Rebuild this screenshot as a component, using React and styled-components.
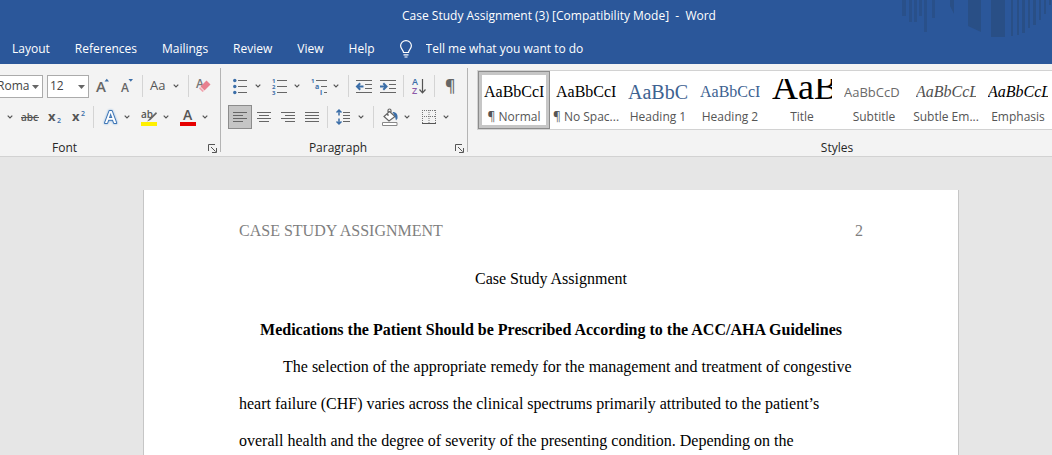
import styled, { createGlobalStyle } from "styled-components"

const tabs = ["Layout", "References", "Mailings", "Review", "View", "Help"]

const serif = `"Liberation Serif", "Times New Roman", serif`
const sans = `"Open Sans", "Noto Sans", sans-serif`

const styles = [
  { name: "¶ Normal", sample: "AaBbCcI", size: 16, color: "#000", selected: true },
  { name: "¶ No Spac...", sample: "AaBbCcI", size: 16, color: "#000" },
  { name: "Heading 1", sample: "AaBbC", size: 20, color: "#3d6291" },
  { name: "Heading 2", sample: "AaBbCcI", size: 16, color: "#3d6291" },
  { name: "Title", sample: "AaB", size: 36, line: 16, color: "#000" },
  { name: "Subtitle", sample: "AaBbCcD", size: 13, color: "#6a6a6a", font: sans },
  { name: "Subtle Em...", sample: "AaBbCcL", size: 16, color: "#505050", italic: true },
  { name: "Emphasis", sample: "AaBbCcL", size: 16, color: "#000", italic: true },
]

const Icon = ({ children, ...rest }) => (
  <svg width="16" height="18" viewBox="0 0 16 18" fill="none" overflow="visible" aria-hidden="true" {...rest}>
    {children}
  </svg>
)

const Chevron = () => (
  <svg width="6" height="4" viewBox="0 0 6 4" fill="none" aria-hidden="true">
    <path d="M.7 .7 3 3 5.3 .7" stroke="#555" strokeWidth="1.2" />
  </svg>
)

const Lines = ({ rows }) => (
  <Icon>
    {rows.map(([from, to], i) => (
      <path key={i} d={`M${from} ${4.5 + i * 3}H${to}`} stroke="#666" />
    ))}
  </Icon>
)

const Split = ({ label, children }) => (
  <SplitButton aria-label={label}>
    {children}
    <Chevron />
  </SplitButton>
)

const Combo = ({ label, value, width, flush }) => (
  <ComboBox $width={width} $flush={flush}>
    <select aria-label={label} defaultValue={value}>
      <option>{value}</option>
    </select>
    <svg width="7" height="4" viewBox="0 0 7 4" aria-hidden="true">
      <path d="M0 0h7L3.500 4z" fill="#666" />
    </svg>
  </ComboBox>
)

const Launcher = ({ label }) => (
  <LauncherButton aria-label={label}>
    <svg width="9" height="9" viewBox="0 0 9 9" fill="none" aria-hidden="true">
      <path d="M.5 7V.5H7M3 3l4.500 4.500M8.500 4v4.500H4" stroke="#555" />
    </svg>
  </LauncherButton>
)

const TitleArt = () => (
  <Art width="152" height="40" viewBox="0 0 152 40" aria-hidden="true">
    <g fill="#294f86">
      <path d="M2 0h4v16H2zM9 0h3v22H9zM14 0h3v22h-3zM19 0h3v16h-3zM24 0h3v32h-3zM32 0h3v18h-3z" opacity=".8" />
      <path d="M50 0h4v14l-4-8z" />
      <path d="M68 0h13v32l-13-6zM91 0h14v37H91z" />
      <path d="M111 0h2v36h-2zM117 0h2v35h-2zM122 0h3v33h-3zM128 0h2v28h-2zM133 0h3v25h-3zM139 0h2v20h-2zM144 0h2v14h-2zM149 0h2v5h-2z" />
    </g>
  </Art>
)

const FontGroup = () => (
  <Group>
    <Row>
      <Combo label="Font" value="Roma" width={43} flush />
      <Combo label="Font size" value="12" width={42} />
      <Tool aria-label="Increase font size">
        <Icon>
          <text x="1" y="15" fontSize="15" fontWeight="600" fill="#666">A</text>
          <path d="M9.500 4.500 11.800 1.800 14 4.500z" fill="#3b6ea8" />
        </Icon>
      </Tool>
      <Tool aria-label="Decrease font size">
        <Icon>
          <text x="2" y="15" fontSize="12" fontWeight="600" fill="#666">A</text>
          <path d="M9.500 2 11.800 4.700 14 2z" fill="#3b6ea8" />
        </Icon>
      </Tool>
      <Separator />
      <Split label="Change case">
        <Icon>
          <text x="-1" y="13" fontSize="13" fill="#555">Aa</text>
        </Icon>
      </Split>
      <Separator />
      <Tool aria-label="Clear all formatting">
        <Icon>
          <text x="0" y="11" fontSize="12" fontWeight="600" fill="#777">A</text>
          <path d="M10.500 3.500 14.500 7.500 8.500 13.500 4.500 9.500z" fill="#e8808f" />
          <path d="M4 10 8 14 6.500 15 3 11.500z" fill="#f0a3ae" />
        </Icon>
      </Tool>
    </Row>
    <Row $indent={7}>
      <MiniButton aria-label="Underline options"><Chevron /></MiniButton>
      <Tool aria-label="Strikethrough">
        <Icon>
          <text x="-1" y="13" fontSize="10" fontWeight="600" fill="#555">abc</text>
          <path d="M-1 9.500h18" stroke="#555" />
        </Icon>
      </Tool>
      <Tool aria-label="Subscript">
        <Icon>
          <text x="2" y="13" fontSize="13" fontWeight="700" fill="#555">x</text>
          <text x="11" y="15" fontSize="7" fontWeight="600" fill="#3b6ea8">2</text>
        </Icon>
      </Tool>
      <Tool aria-label="Superscript">
        <Icon>
          <text x="2" y="13" fontSize="13" fontWeight="700" fill="#555">x</text>
          <text x="11" y="8" fontSize="7" fontWeight="600" fill="#3b6ea8">2</text>
        </Icon>
      </Tool>
      <Separator />
      <Split label="Text effects">
        <Icon>
          <OutlinedLetter x="3" y="15">A</OutlinedLetter>
        </Icon>
      </Split>
      <Split label="Text highlight color">
        <Icon>
          <text x="0" y="10" fontSize="10" fontWeight="600" fill="#555">ab</text>
          <path d="M15 4 8.500 10.500 6 13.500l3.500-1.500L16 5.500z" fill="#666" />
          <path d="M0 14h16v4H0z" fill="#fff000" />
        </Icon>
      </Split>
      <Split label="Font color">
        <Icon>
          <text x="3" y="12" fontSize="14" fontWeight="600" fill="#555">A</text>
          <path d="M0 14h16v4H0z" fill="#e60000" />
        </Icon>
      </Split>
    </Row>
    <Footer $shift={79}>
      <span>Font</span>
      <Launcher label="Font settings" />
    </Footer>
  </Group>
)

const ParagraphGroup = () => (
  <Group>
    <Row $indent={7}>
      <Split label="Bullets">
        <Icon>
          {[3.5, 9.5, 15.5].map(y => (
            <g key={y}>
              <circle cx="1.800" cy={y} r="1.700" fill="#3b6ea8" />
              <path d={`M5 ${y}h9`} stroke="#666" />
            </g>
          ))}
        </Icon>
      </Split>
      <Split label="Numbering">
        <Icon>
          {[1, 2, 3].map(n => (
            <g key={n}>
              <text x="0" y={n * 6} fontSize="6" fontWeight="700" fill="#3b6ea8">{n}</text>
              <path d={`M5 ${n * 6 - 2.5}h10`} stroke="#666" />
            </g>
          ))}
        </Icon>
      </Split>
      <Split label="Multilevel list">
        <Icon>
          <text x="0" y="6" fontSize="6" fontWeight="700" fill="#3b6ea8">1</text>
          <text x="4" y="12" fontSize="7" fontWeight="700" fill="#3b6ea8">a</text>
          <text x="9" y="18" fontSize="7" fontWeight="700" fill="#3b6ea8">i</text>
          <path d="M5 3.500h11M10 9.500h6M13 15.500h3" stroke="#666" />
        </Icon>
      </Split>
      <Separator />
      <Tool aria-label="Decrease indent">
        <Icon>
          <path d="M0 3.500h16M9 7.500h7M9 11.500h7M0 15.500h16" stroke="#666" />
          <path d="M7.500 9.500H1M4.200 6.300 1 9.500l3.200 3.200" stroke="#3b6ea8" strokeWidth="2" />
        </Icon>
      </Tool>
      <Tool aria-label="Increase indent">
        <Icon>
          <path d="M0 3.500h16M9 7.500h7M9 11.500h7M0 15.500h16" stroke="#666" />
          <path d="M0 9.500h6.500M3.300 6.300l3.200 3.200-3.200 3.200" stroke="#3b6ea8" strokeWidth="2" />
        </Icon>
      </Tool>
      <Separator />
      <Tool aria-label="Sort">
        <Icon>
          <text x="1" y="8" fontSize="9" fontWeight="600" fill="#3b6ea8">A</text>
          <text x="1" y="17" fontSize="9" fontWeight="600" fill="#8c5aa8">Z</text>
          <path d="M11.500 2v14M8.500 12.500l3 3.300 3-3.300" stroke="#555" strokeWidth="1.200" />
        </Icon>
      </Tool>
      <Separator />
      <Tool aria-label="Show paragraph marks">
        <Icon>
          <text x="3" y="14" fontSize="16" fontWeight="600" fill="#666">¶</text>
        </Icon>
      </Tool>
    </Row>
    <Row $indent={7}>
      <Tool aria-label="Align left" aria-pressed="true">
        <Lines rows={[[1, 15], [1, 11], [1, 15], [1, 11]]} />
      </Tool>
      <Tool aria-label="Center">
        <Lines rows={[[1, 15], [3, 13], [1, 15], [3, 13]]} />
      </Tool>
      <Tool aria-label="Align right">
        <Lines rows={[[1, 15], [5, 15], [1, 15], [5, 15]]} />
      </Tool>
      <Tool aria-label="Justify">
        <Lines rows={[[1, 15], [1, 15], [1, 15], [1, 15]]} />
      </Tool>
      <Separator />
      <Split label="Line spacing">
        <Icon>
          <path d="M3 2v5.500M3 10.500V16M.5 4.500 3 2l2.500 2.500M.5 13.500 3 16l2.500-2.500" stroke="#3b6ea8" strokeWidth="1.500" />
          <path d="M7 4.500h7M7 7.500h7M7 10.500h7M7 13.500h7" stroke="#666" />
        </Icon>
      </Split>
      <Separator />
      <Split label="Shading">
        <Icon>
          <path d="M7.500 3.500 13 8.500l-6 4.500-5-4.500zM6 8V2.500a1.500 1.500 0 0 1 3 0V6" fill="#fff" stroke="#666" strokeWidth="1.200" />
          <path d="M10.500 4c4 0 5.500 2.500 5 6.500l-1.500 2-1-4z" fill="#3b6ea8" />
          <path d="M.5 14.500h14.500v3H.5z" fill="#fff" stroke="#888" />
        </Icon>
      </Split>
      <Split label="Borders">
        <Icon>
          <path d="M1 2.500h14M1 8.500h14M1.500 2v13M8 2v13M14.500 2v13" stroke="#777" strokeDasharray="1 1" />
          <path d="M1 15.500h14" stroke="#555" />
        </Icon>
      </Split>
    </Row>
    <Footer>
      <span>Paragraph</span>
      <Launcher label="Paragraph settings" />
    </Footer>
  </Group>
)

const StylesGroup = () => (
  <StylesPanel>
    <Gallery>
      {styles.map(({ name, sample, size, line, color, font, italic, selected }) => (
        <StyleCard key={name} aria-pressed={!!selected}>
          <Sample $size={size} $line={line} $color={color} $font={font} $italic={italic}>{sample}</Sample>
          <StyleName>{name}</StyleName>
        </StyleCard>
      ))}
    </Gallery>
    <Footer>
      <span>Styles</span>
    </Footer>
  </StylesPanel>
)

const App = () => {
  return (
    <Window>
      <GlobalStyle />
      <Header>
        <TitleArt />
        <TitleBar>Case Study Assignment (3) [Compatibility Mode]&nbsp; -&nbsp; Word</TitleBar>
        <Tabs>
          {tabs.map(tab => <Tab key={tab}>{tab}</Tab>)}
          <TellMe>
            <svg width="12" height="18" viewBox="0 0 12 18" fill="none" stroke="#fff" strokeWidth="1.200" aria-hidden="true">
              <path d="M3.500 12.500c0-2.500-2.900-3.500-2.900-6.700a5.400 5.200 0 0 1 10.800 0c0 3.200-2.900 4.200-2.900 6.700zM3.500 14.800h5M4.500 17h3" />
            </svg>
            <input aria-label="Tell me" placeholder="Tell me what you want to do" />
          </TellMe>
        </Tabs>
      </Header>

      <Ribbon>
        <FontGroup />
        <ParagraphGroup />
        <StylesGroup />
      </Ribbon>

      <Canvas>
        <Page>
          <PageHeader>
            <span>CASE STUDY ASSIGNMENT</span>
            <span>2</span>
          </PageHeader>
          <DocTitle>Case Study Assignment</DocTitle>
          <DocHeading>Medications the Patient Should be Prescribed According to the ACC/AHA Guidelines</DocHeading>
          <DocText>
            The selection of the appropriate remedy for the management and treatment of congestive
            heart failure (CHF) varies across the clinical spectrums primarily attributed to the patient’s
            overall health and the degree of severity of the presenting condition. Depending on the
          </DocText>
        </Page>
      </Canvas>
    </Window>
  )
}

const GlobalStyle = createGlobalStyle`
  * {
    box-sizing: border-box;
  }
  body {
    margin: 0;
    font-family: ${sans};
    font-size: 12px;
    line-height: 16px;
    color: #262626;
  }
  button, select, input {
    margin: 0;
    padding: 0;
    border: 0;
    background: none;
    font: inherit;
    color: inherit;
  }
`

const Window = styled.div`
  display: flex;
  flex-direction: column;
  height: 100vh;
  overflow: hidden;
`

const Header = styled.header`
  position: relative;
  background: #2b579a;
  color: #fff;
`

const Art = styled.svg`
  position: absolute;
  top: 0;
  right: 0;
`

const TitleBar = styled.div`
  padding: 8px 0 8px 66px;
  text-align: center;
`

const Tabs = styled.nav`
  display: flex;
  align-items: center;
  gap: 25px;
  height: 32px;
  padding: 2px 12px 0;
`

const Tab = styled.button`
  white-space: nowrap;
`

const TellMe = styled.label`
  display: flex;
  align-items: center;
  gap: 14px;

  input {
    width: 200px;
    outline: none;
  }
  input::placeholder {
    color: #fff;
    opacity: 1;
  }
`

const Ribbon = styled.div`
  display: flex;
  overflow: hidden;
  flex-shrink: 0;
  background: #f3f3f3;
  border-bottom: 1px solid #d2d2d2;
`

const Group = styled.section`
  display: flex;
  flex-direction: column;
  gap: 7px;
  flex: 0 0 auto;
  width: 247px;
  padding-top: 10px;
  background: linear-gradient(#b4b4b4, #b4b4b4) right center / 1px 84px no-repeat;

  &:first-child {
    width: 221px;
  }
`

const Row = styled.div`
  display: flex;
  align-items: center;
  height: 24px;
  padding-left: ${({ $indent }) => $indent || 0}px;
`

const Tool = styled.button`
  display: flex;
  align-items: center;
  justify-content: center;
  width: 24px;
  height: 24px;

  &[aria-pressed="true"] {
    background: #c5c5c5;
    border: 1px solid #8c8c8c;
  }
`

const SplitButton = styled.button`
  display: flex;
  align-items: center;
  gap: 6px;
  height: 24px;
  margin: 0 6px 0 5px;
`

const MiniButton = styled.button`
  display: flex;
  margin-right: 5px;
`

const OutlinedLetter = styled.text`
  font-size: 17px;
  font-weight: 600;
  fill: #fff;
  stroke: #3d74b3;
  stroke-width: 2px;
  stroke-linejoin: round;
  paint-order: stroke;
  filter: drop-shadow(0 0 1px #7fb0e0);
`

const Separator = styled.span`
  width: 1px;
  height: 22px;
  margin: 0 3px;
  background: #d4d4d4;
`

const ComboBox = styled.span`
  position: relative;
  width: ${({ $width }) => $width}px;
  margin-right: ${({ $flush }) => ($flush ? 4 : 2)}px;

  select {
    display: block;
    appearance: none;
    width: 100%;
    height: 23px;
    padding-left: ${({ $flush }) => ($flush ? 0 : 2)}px;
    text-indent: ${({ $flush }) => ($flush ? -3 : 0)}px;
    border: 1px solid #ababab;
    border-left-width: ${({ $flush }) => ($flush ? 0 : 1)}px;
    background: #fff;
    color: #444;
  }
  svg {
    position: absolute;
    top: 10px;
    right: 4px;
    pointer-events: none;
  }
`

const Footer = styled.div`
  display: flex;
  align-items: center;
  height: 16px;
  margin-top: 4px;

  span {
    flex: 1;
    padding-right: ${({ $shift }) => $shift || 0}px;
    text-align: center;
  }
`

const LauncherButton = styled.button`
  display: flex;
  width: 12px;
  margin-right: 1px;
`

const StylesPanel = styled.section`
  display: flex;
  flex-direction: column;
  flex: 0 0 auto;
  width: 738px;
  padding-top: 6px;
`

const Gallery = styled.div`
  display: flex;
  height: 60px;
  margin: 0 9px 6px;
  background: #fff;
  border: 1px solid #d2d2d2;
`

const StyleCard = styled.button`
  display: flex;
  flex-direction: column;
  align-items: center;
  width: 72px;
  height: 58px;
  padding-top: 8px;

  &[aria-pressed="true"] {
    box-shadow: inset 0 0 0 1px #8c8c8c, inset 0 0 0 4px #c6c6c6;
  }
`

const Sample = styled.span`
  display: block;
  width: 60px;
  height: 30px;
  overflow: hidden;
  font-family: ${({ $font }) => $font || serif};
  font-size: ${({ $size }) => $size}px;
  font-style: ${({ $italic }) => ($italic ? "italic" : "normal")};
  line-height: ${({ $line }) => $line || 26}px;
  text-align: left;
  white-space: nowrap;
  color: ${({ $color }) => $color};
`

const StyleName = styled.span`
  color: #555;
  white-space: nowrap;
`

const Canvas = styled.main`
  flex: 1;
  min-height: 0;
  overflow: hidden;
  display: flex;
  justify-content: center;
  padding: 33px 0 0 50px;
  background: #e6e6e6;
`

const Page = styled.article`
  width: 100%;
  max-width: 816px;
  padding: 32px 95px 0;
  background: #fff;
  border: solid #c6c6c6;
  border-width: 0 1px;
  font-family: ${serif};
  font-size: 16px;
  line-height: 37px;
  color: #000;
`

const PageHeader = styled.div`
  display: flex;
  justify-content: space-between;
  margin-bottom: 20px;
  line-height: 18px;
  color: #7f7f7f;
`

const DocTitle = styled.h1`
  margin: 0 0 14px;
  font-size: 16px;
  font-weight: 400;
  text-align: center;
`

const DocHeading = styled.h2`
  margin: 0;
  font-size: 16px;
  font-weight: 700;
  text-align: center;
`

const DocText = styled.p`
  margin: 0;
  text-indent: 44px;
`

export default App
